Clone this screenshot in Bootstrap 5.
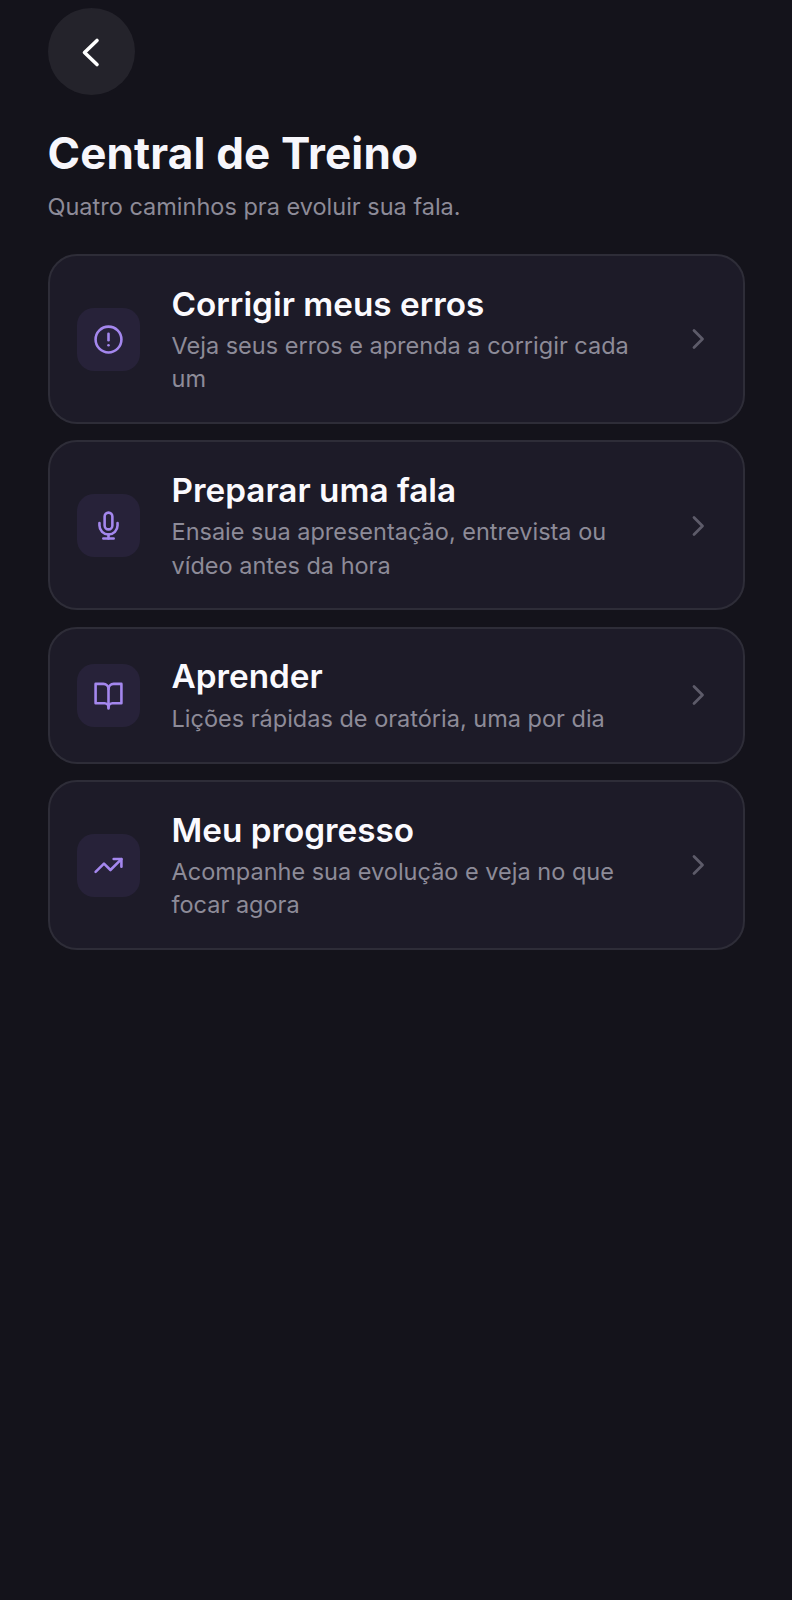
<!DOCTYPE html>
<html lang="pt-BR">

<head>
    <meta charset="UTF-8">
    <meta name="viewport" content="width=device-width, initial-scale=1.0">
    <title>Central de Treino</title>
    <link href="https://cdn.jsdelivr.net/npm/bootstrap@5.3.0/dist/css/bootstrap.min.css" rel="stylesheet">
    <style>
        body {
            font-family: Inter, sans-serif;
            background-color: #14131b;
            min-height: 1600px;
        }

        .screen {
            padding: 8px 47px 0 47.5px;
        }

        .back-btn {
            width: 87px;
            height: 87px;
            background: #24232b;
            border: none;
            color: #fff;
        }

        .page-title {
            font-size: 44px;
            font-weight: 700;
            line-height: 54px;
            letter-spacing: 0.15px;
            color: #f7f6fb;
            margin: 31px 0 0;
        }

        .page-sub {
            font-size: 23.5px;
            line-height: 33px;
            color: #8d8b98;
            margin: 10px 0 31px;
        }

        .path-list {
            gap: 16.5px;
        }

        .path-item {
            background: #1d1b28;
            border: 2px solid #2e2d38;
            border-radius: 29px;
            padding: 26.5px 28px 26.4px 27.5px;
        }

        .path-icon {
            width: 63px;
            height: 63px;
            border-radius: 17px;
            background: #272239;
            color: #a487ee;
        }

        .path-text {
            margin-left: 31.5px;
            width: 476px;
        }

        .path-name {
            font-size: 33.3px;
            font-weight: 600;
            line-height: 43px;
            color: #fbfafe;
            margin: 0 0 3.5px;
        }

        .path-desc {
            font-size: 23.5px;
            line-height: 33.3px;
            color: #8d8b98;
            margin: 0;
        }

        .path-chevron {
            color: #5d5b69;
            margin-right: 5px;
        }
    </style>
</head>

<body>
    <div class="screen">
        <button class="back-btn rounded-circle d-flex align-items-center justify-content-center" aria-label="Voltar">
            <svg width="36" height="36" viewBox="0 0 36 36" fill="none" stroke="currentColor" stroke-width="3.6" stroke-linecap="round" stroke-linejoin="round"><path d="M24 6.5 L11.5 18.5 L24 30.5"/></svg>
        </button>

        <h1 class="page-title">Central de Treino</h1>
        <p class="page-sub">Quatro caminhos pra evoluir sua fala.</p>

        <div class="path-list d-flex flex-column">
            <div class="path-item d-flex align-items-center justify-content-between">
                <div class="d-flex align-items-center">
                    <div class="path-icon d-flex align-items-center justify-content-center flex-shrink-0">
                        <svg width="31" height="31" viewBox="0 0 24 24" fill="none" stroke="currentColor" stroke-width="2" stroke-linecap="round" stroke-linejoin="round"><circle cx="12" cy="12" r="10"/><path d="M12 7.5v5"/><path d="M12 16.5h.01"/></svg>
                    </div>
                    <div class="path-text">
                        <h2 class="path-name">Corrigir meus erros</h2>
                        <p class="path-desc">Veja seus erros e aprenda a corrigir cada um</p>
                    </div>
                </div>
                <svg class="path-chevron flex-shrink-0" width="24" height="24" viewBox="0 0 24 24" fill="none" stroke="currentColor" stroke-width="2.8" stroke-linecap="round" stroke-linejoin="round"><path d="M8 3.5 L16.5 12 L8 20.5"/></svg>
            </div>

            <div class="path-item d-flex align-items-center justify-content-between">
                <div class="d-flex align-items-center">
                    <div class="path-icon d-flex align-items-center justify-content-center flex-shrink-0">
                        <svg width="31" height="31" viewBox="0 0 24 24" fill="none" stroke="currentColor" stroke-width="2" stroke-linecap="round" stroke-linejoin="round"><path d="M12 2a3 3 0 0 0-3 3v7a3 3 0 0 0 6 0V5a3 3 0 0 0-3-3Z"/><path d="M19 10v2a7 7 0 0 1-14 0v-2"/><path d="M12 19v3"/><path d="M8 22h8"/></svg>
                    </div>
                    <div class="path-text">
                        <h2 class="path-name">Preparar uma fala</h2>
                        <p class="path-desc">Ensaie sua apresentação, entrevista ou vídeo antes da hora</p>
                    </div>
                </div>
                <svg class="path-chevron flex-shrink-0" width="24" height="24" viewBox="0 0 24 24" fill="none" stroke="currentColor" stroke-width="2.8" stroke-linecap="round" stroke-linejoin="round"><path d="M8 3.5 L16.5 12 L8 20.5"/></svg>
            </div>

            <div class="path-item d-flex align-items-center justify-content-between">
                <div class="d-flex align-items-center">
                    <div class="path-icon d-flex align-items-center justify-content-center flex-shrink-0">
                        <svg width="31" height="31" viewBox="0 0 24 24" fill="none" stroke="currentColor" stroke-width="2" stroke-linecap="round" stroke-linejoin="round"><path d="M12 7v15"/><path d="M2 3h6a4 4 0 0 1 4 4 4 4 0 0 1 4-4h6v15h-7a3 3 0 0 0-3 3 3 3 0 0 0-3-3H2Z"/></svg>
                    </div>
                    <div class="path-text">
                        <h2 class="path-name">Aprender</h2>
                        <p class="path-desc">Lições rápidas de oratória, uma por dia</p>
                    </div>
                </div>
                <svg class="path-chevron flex-shrink-0" width="24" height="24" viewBox="0 0 24 24" fill="none" stroke="currentColor" stroke-width="2.8" stroke-linecap="round" stroke-linejoin="round"><path d="M8 3.5 L16.5 12 L8 20.5"/></svg>
            </div>

            <div class="path-item d-flex align-items-center justify-content-between">
                <div class="d-flex align-items-center">
                    <div class="path-icon d-flex align-items-center justify-content-center flex-shrink-0">
                        <svg width="31" height="31" viewBox="0 0 24 24" fill="none" stroke="currentColor" stroke-width="2" stroke-linecap="round" stroke-linejoin="round"><path d="M22 7 13.5 15.5l-5-5L2 17"/><path d="M16 7h6v6"/></svg>
                    </div>
                    <div class="path-text">
                        <h2 class="path-name">Meu progresso</h2>
                        <p class="path-desc">Acompanhe sua evolução e veja no que focar agora</p>
                    </div>
                </div>
                <svg class="path-chevron flex-shrink-0" width="24" height="24" viewBox="0 0 24 24" fill="none" stroke="currentColor" stroke-width="2.8" stroke-linecap="round" stroke-linejoin="round"><path d="M8 3.5 L16.5 12 L8 20.5"/></svg>
            </div>
        </div>
    </div>

    <script src="https://cdn.jsdelivr.net/npm/bootstrap@5.3.0/dist/js/bootstrap.bundle.min.js"></script>
</body>

</html>
